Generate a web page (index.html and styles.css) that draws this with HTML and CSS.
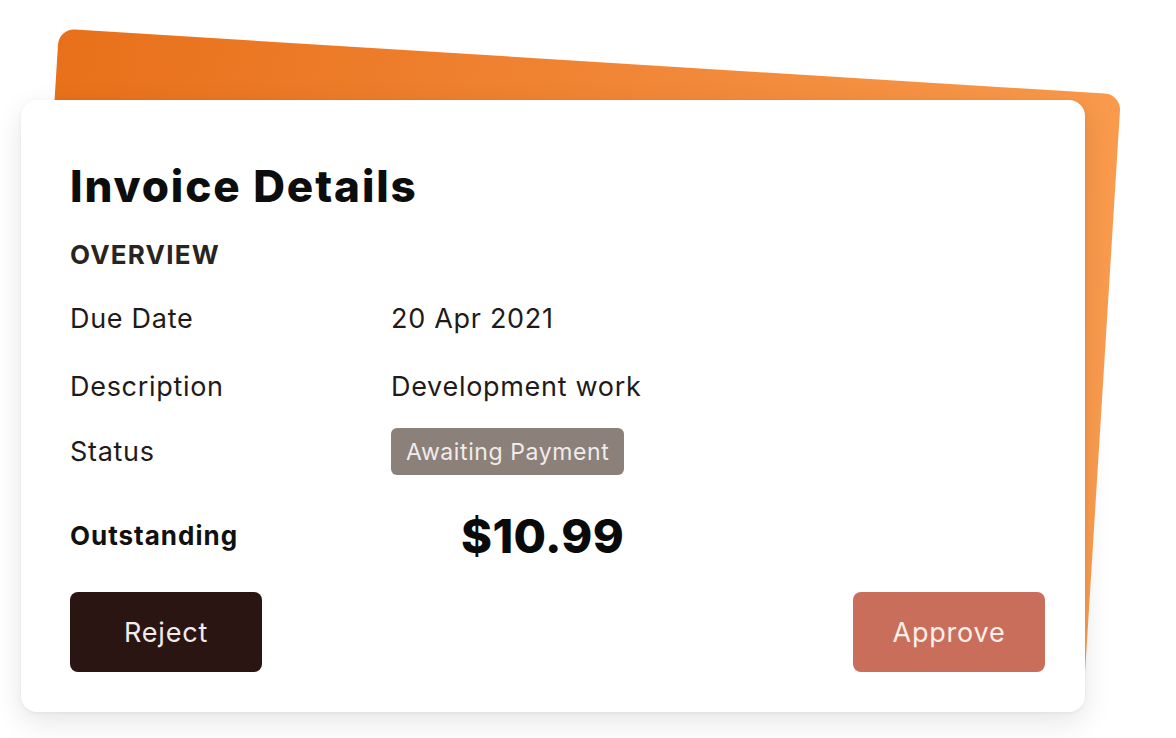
FILE: index.html
```html
<!DOCTYPE html>
<html lang="en">
<head>
<meta charset="utf-8">
<title>Invoice Details</title>
<link rel="stylesheet" href="styles.css">
</head>
<body>
<div class="stage">
  <div class="backdrop"></div>
  <section class="card">
    <h1 class="title">Invoice Details</h1>
    <h2 class="section">OVERVIEW</h2>
    <div class="rows">
      <div class="row row-date"><span class="label">Due Date</span><span class="value">20 Apr 2021</span></div>
      <div class="row row-desc"><span class="label">Description</span><span class="value">Development work</span></div>
      <div class="row row-status"><span class="label">Status</span><span class="value"><span class="badge">Awaiting Payment</span></span></div>
      <div class="row row-total"><span class="label strong">Outstanding</span><span class="value amount">$10.99</span></div>
    </div>
    <div class="actions">
      <button class="btn btn-reject">Reject</button>
      <button class="btn btn-approve">Approve</button>
    </div>
  </section>
</div>
</body>
</html>
```

FILE: styles.css
```css
* { box-sizing: border-box; }
html, body { margin: 0; padding: 0; background: #ffffff; }
body { font-family: Inter, "Noto Sans", "Liberation Sans", sans-serif; color: #1c1a19; width: 1176px; height: 738px; overflow: hidden; }

.stage { position: relative; width: 1176px; height: 738px; padding: 100px 0 0 21px; }

.backdrop {
  position: absolute;
  left: 39px;
  top: 61px;
  width: 1064px;
  height: 612px;
  border-radius: 16px;
  background: linear-gradient(100deg, #e8701a 0%, #f2893a 55%, #fb9e50 100%);
  transform: rotate(3.556deg);
}

.card {
  position: relative;
  width: 1064px;
  height: 612px;
  background: #ffffff;
  border-radius: 16px;
  box-shadow: 0 10px 30px rgba(0, 0, 0, 0.10), 0 1px 4px rgba(0, 0, 0, 0.06);
  padding: 60px 40px 40px 49px;
  display: flex;
  flex-direction: column;
}

.title {
  margin: 0;
  font-size: 44px;
  line-height: 52px;
  font-weight: 800;
  color: #0d0d0d;
  letter-spacing: 1.9px;
}

.section {
  margin: 28px 0 0 0;
  font-size: 26px;
  line-height: 30px;
  font-weight: 700;
  color: #2a2420;
  letter-spacing: 1.2px;
}

.rows { display: flex; flex-direction: column; margin-top: 34px; }
.row { display: flex; align-items: center; }
.label { width: 321px; font-size: 27px; line-height: 30px; color: #1e1b1a; letter-spacing: 0.7px; }
.value { font-size: 27px; line-height: 30px; color: #1e1b1a; letter-spacing: 0.7px; }
.row-desc { margin-top: 38px; }
.row-status { margin-top: 26px; }
.row-total { margin-top: 33px; }

.badge {
  display: inline-flex;
  align-items: center;
  height: 47px;
  padding: 0 15px;
  border-radius: 6px;
  background: #8b807a;
  color: #f1ece9;
  font-size: 23px;
  letter-spacing: 0.6px;
}

.strong { font-size: 26px; font-weight: 700; color: #111; letter-spacing: 1px; }
.amount { font-size: 47px; line-height: 56px; font-weight: 800; color: #0a0a0a; padding-left: 70px; letter-spacing: 0.4px; }

.actions { display: flex; justify-content: space-between; margin-top: auto; }
.btn {
  width: 192px;
  height: 80px;
  border: 0;
  border-radius: 8px;
  font-family: Inter, "Noto Sans", "Liberation Sans", sans-serif;
  font-size: 27px;
  letter-spacing: 0.8px;
  cursor: pointer;
}
.btn-reject { background: #2a1512; color: #f1eceb; }
.btn-approve { background: #c96e5a; color: #fcefea; }
```
